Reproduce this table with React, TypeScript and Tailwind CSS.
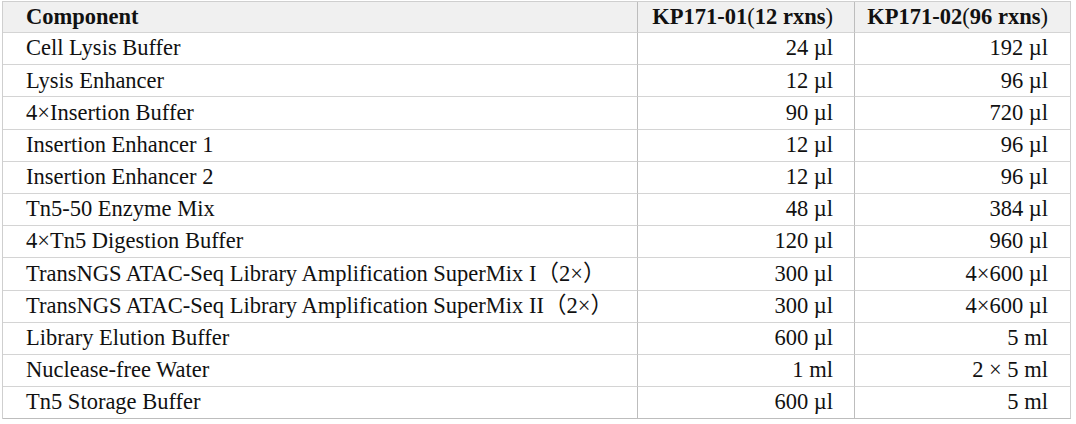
type Row = {
  name: string;
  small: string;
  large: string;
};

const rows: Row[] = [
  { name: "Cell Lysis Buffer", small: "24 µl", large: "192 µl" },
  { name: "Lysis Enhancer", small: "12 µl", large: "96 µl" },
  { name: "4×Insertion Buffer", small: "90 µl", large: "720 µl" },
  { name: "Insertion Enhancer 1", small: "12 µl", large: "96 µl" },
  { name: "Insertion Enhancer 2", small: "12 µl", large: "96 µl" },
  { name: "Tn5-50 Enzyme Mix", small: "48 µl", large: "384 µl" },
  { name: "4×Tn5 Digestion Buffer", small: "120 µl", large: "960 µl" },
  { name: "TransNGS ATAC-Seq Library Amplification SuperMix I（2×）", small: "300 µl", large: "4×600 µl" },
  { name: "TransNGS ATAC-Seq Library Amplification SuperMix II（2×）", small: "300 µl", large: "4×600 µl" },
  { name: "Library Elution Buffer", small: "600 µl", large: "5 ml" },
  { name: "Nuclease-free Water", small: "1 ml", large: "2 × 5 ml" },
  { name: "Tn5 Storage Buffer", small: "600 µl", large: "5 ml" },
];

export default function App() {
  return (
    <div className="bg-white w-[1076px] h-[424px] pt-[1px] pl-[2px]">
      <table
        className="border-separate border-spacing-0 border-t border-l border-[#cfcfcf] text-[22.5px] leading-none text-[#111]"
        style={{ fontFamily: '"Liberation Serif", "Noto Sans CJK SC", serif' }}
      >
        <colgroup>
          <col className="w-[635px]" />
          <col className="w-[217px]" />
          <col className="w-[216px]" />
        </colgroup>
        <thead>
          <tr className="bg-[#f0f0f0]">
            <th className="h-[31px] text-left font-bold pl-[23px] border-b border-b-[#d4d4d4] border-r border-r-[#bdbdbd]">
              Component
            </th>
            <th className="text-right font-bold pr-[21px] border-b border-b-[#d4d4d4] border-r border-r-[#bdbdbd] whitespace-nowrap">
              KP171-01<span className="font-normal">(</span>12 rxns<span className="font-normal">)</span>
            </th>
            <th className="text-right font-bold pr-[22px] border-b border-b-[#d4d4d4] border-r border-r-[#d0d0d0] whitespace-nowrap">
              KP171-02<span className="font-normal">(</span>96 rxns<span className="font-normal">)</span>
            </th>
          </tr>
        </thead>
        <tbody>
          {rows.map((row, i) => (
            <tr key={row.name}>
              <td
                className={`h-[32.2px] pl-[23px] border-r border-r-[#bdbdbd] whitespace-nowrap ${
                  i === rows.length - 1 ? "border-b border-b-[#bdbdbd]" : "border-b border-b-[#d4d4d4]"
                }`}
              >
                {row.name}
              </td>
              <td
                className={`text-right pr-[21px] border-r border-r-[#bdbdbd] ${
                  i === rows.length - 1 ? "border-b border-b-[#bdbdbd]" : "border-b border-b-[#d4d4d4]"
                }`}
              >
                {row.small}
              </td>
              <td
                className={`text-right pr-[22px] border-r border-r-[#d0d0d0] ${
                  i === rows.length - 1 ? "border-b border-b-[#bdbdbd]" : "border-b border-b-[#d4d4d4]"
                }`}
              >
                {row.large}
              </td>
            </tr>
          ))}
        </tbody>
      </table>
    </div>
  );
}
